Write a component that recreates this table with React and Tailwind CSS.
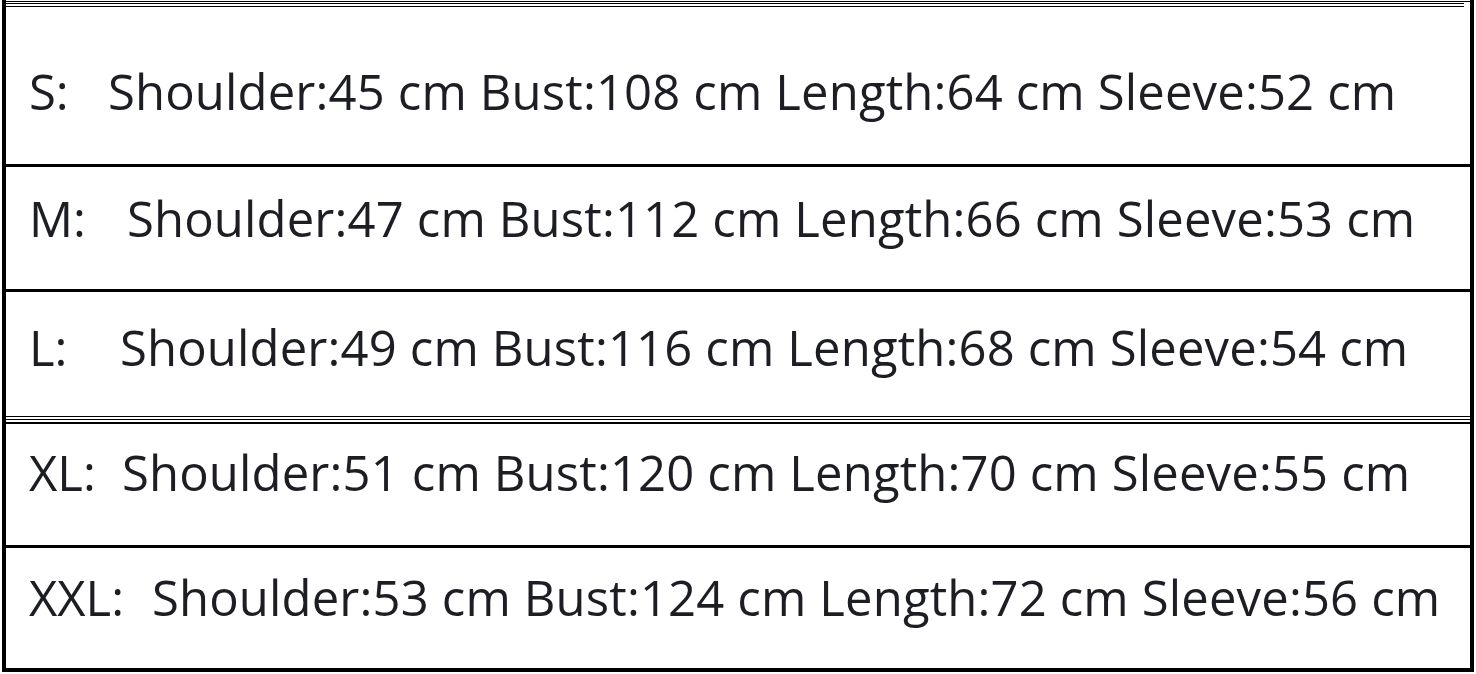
import React from "react";

const rows = [
  { label: "S:", labelW: "w-[79px]", h: "h-[156px]", pt: "pt-[59px]", text: "Shoulder:45 cm Bust:108 cm Length:64 cm Sleeve:52 cm" },
  { label: "M:", labelW: "w-[98px]", h: "h-[122px]", pt: "pt-[27px]", text: "Shoulder:47 cm Bust:112 cm Length:66 cm Sleeve:53 cm" },
  { label: "L:", labelW: "w-[91px]", h: "h-[123px]", pt: "pt-[31px]", text: "Shoulder:49 cm Bust:116 cm Length:68 cm Sleeve:54 cm" },
  { label: "XL:", labelW: "w-[93px]", h: "h-[121px]", pt: "pt-[24px]", text: "Shoulder:51 cm Bust:120 cm Length:70 cm Sleeve:55 cm" },
  { label: "XXL:", labelW: "w-[123px]", h: "h-[120px]", pt: "pt-[25px]", text: "Shoulder:53 cm Bust:124 cm Length:72 cm Sleeve:56 cm" },
];

function Row({ row }) {
  return (
    <div className={`${row.h} ${row.pt} pl-[23px] flex items-start`}>
      <span className={`${row.labelW} shrink-0`}>{row.label}</span>
      <span className="whitespace-nowrap tracking-[0.15px]">{row.text}</span>
    </div>
  );
}

export default function App() {
  return (
    <div className="w-[1476px] h-[674px] bg-white overflow-hidden">
      <div
        className="ml-[2px] w-[1472px] border-l-4 border-r-4 border-b-4 border-black text-[#1c1e24] text-[49px] leading-none"
        style={{ fontFamily: '"Open Sans", "Noto Sans", sans-serif' }}
      >
        {/* top triple rule */}
        <div className="h-[8px] pt-[1px] flex flex-col">
          <div className="h-px bg-black" />
          <div className="h-px bg-black mt-[1px] mr-[6px]" />
          <div className="h-px bg-black mt-[2px] mr-[6px]" />
        </div>

        <Row row={rows[0]} />
        <div className="h-[3px] bg-black" />
        <Row row={rows[1]} />
        <div className="h-[3px] bg-black" />
        <Row row={rows[2]} />

        {/* triple rule */}
        <div className="h-[9px] pt-px flex flex-col">
          <div className="h-px bg-black" />
          <div className="h-px bg-black mt-[2px]" />
          <div className="h-[2px] bg-black mt-[2px]" />
        </div>

        <Row row={rows[3]} />
        <div className="h-[3px] bg-black" />
        <Row row={rows[4]} />
      </div>
    </div>
  );
}
